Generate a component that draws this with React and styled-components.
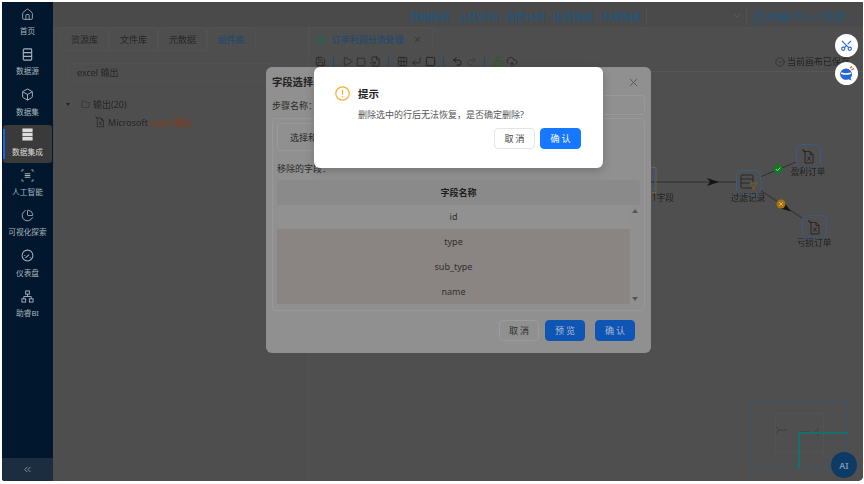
import React from 'react'
import styled, { createGlobalStyle } from 'styled-components'
import {
  Box, ChevronDown, ChevronsLeft, CircleCheck, CloudUpload, FileInput, Grid3x2, Home,
  LockOpen, PieChart, Play, Redo2, Save, Scissors, Square, Undo2, X, Folder, CornerDownLeft, Layers
} from 'lucide-react'

const GlobalStyle = createGlobalStyle`
  html, body {
    margin: 0;
    background: #fff;
  }
  #root {
    width: 864px;
    height: 484px;
    overflow: hidden;
  }
  * {
    box-sizing: border-box;
  }
`

const Frame = styled.div`
  width: 864px;
  height: 484px;
  padding: 2px 1px 3px 2px;
  font-family: "Noto Sans", "Noto Sans CJK SC", sans-serif;
  font-size: 9px;
  color: #262626;
`

const Screen = styled.div`
  position: relative;
  display: flex;
  width: 100%;
  height: 100%;
  overflow: hidden;
  border-radius: 0 0 5px 3px;
  background: #4e4e4e;
  filter: blur(0.25px);
`

const Sidebar = styled.aside`
  display: flex;
  flex-direction: column;
  flex: 0 0 51px;
  padding-top: 2px;
  background: #00172e;
`

const NavItem = styled.div`
  position: relative;
  display: flex;
  flex-direction: column;
  align-items: center;
  width: 49px;
  height: 38px;
  margin: 0 0 2.3px 1px;
  padding-top: 3.5px;
  border-radius: 3px;
  background: ${p => (p.$active ? '#3a3a3b' : 'transparent')};
  color: ${p => (p.$active ? '#dcdcdc' : '#aab3bc')};

  &::before {
    content: ${p => (p.$active ? "''" : 'none')};
    position: absolute;
    left: 0;
    top: 4px;
    bottom: 4px;
    width: 2px;
    background: #1668dc;
  }

  svg {
    display: block;
    width: 13px;
    height: 13px;
  }
`

const NavLabel = styled.span`
  margin-top: 5.5px;
  font-size: 7.7px;
  line-height: 10px;
  white-space: nowrap;
`

const CollapseBar = styled.div`
  display: flex;
  align-items: center;
  justify-content: center;
  height: 23px;
  margin-top: auto;
  background: #1c2d40;
  color: #8895a2;
`

const Main = styled.div`
  display: flex;
  flex-direction: column;
  flex: 1;
  min-width: 0;
`

const Header = styled.header`
  display: flex;
  justify-content: flex-end;
  flex: 0 0 25px;
  padding: 5px 7px 0 0;
  background: #4a4a4a;
  color: #1a5884;
  font-size: 10.1px;
  line-height: 20px;
`

const HeaderLink = styled.span`
  margin-right: 7px;
  white-space: nowrap;
`

const HeaderSelect = styled.div`
  display: flex;
  align-items: center;
  justify-content: flex-end;
  width: 101px;
  height: 18px;
  margin: 0 7px 0 -1px;
  padding-right: 4px;
  border-left: 1px solid #535353;
  border-right: 1px solid #535353;
  color: #626262;
`

const Project = styled.div`
  display: flex;
  align-items: center;
  gap: 3px;
  white-space: nowrap;
`

const Body = styled.div`
  display: flex;
  flex: 1;
  min-height: 0;
`

const LeftPanel = styled.section`
  flex: 0 0 256px;
  padding: 0 0 0 7px;
  border-right: 1px solid #525252;
`

const TabRow = styled.div`
  display: flex;
  height: 24px;
`

const LibTab = styled.div`
  display: flex;
  align-items: center;
  justify-content: center;
  width: 49px;
  border: 1px solid #525252;
  border-bottom: ${p => (p.$active ? '1px solid transparent' : '1px solid #525252')};
  border-radius: 3px 3px 0 0;
  color: ${p => (p.$active ? '#17487a' : '#262626')};
`

const Search = styled.div`
  display: flex;
  align-items: center;
  width: 207px;
  height: 19px;
  margin: 12px 0 0 8px;
  padding-left: 8px;
  border: 1px solid #525252;
  border-radius: 3px;
  color: #262626;
`

const TreeRow = styled.div`
  display: flex;
  align-items: center;
  gap: 3px;
  height: 16px;
  margin-top: ${p => p.$top || 0}px;
  padding-left: ${p => p.$indent}px;
  color: #262626;
  white-space: pre;
`

const Caret = styled.span`
  width: 0;
  height: 0;
  margin-right: 8px;
  border: 2.5px solid transparent;
  border-top: 3.5px solid #222;
  border-bottom: 0;
`

const Match = styled.span`
  color: #8c3a12;
`

const Workspace = styled.section`
  display: flex;
  flex-direction: column;
  flex: 1;
  min-width: 0;
`

const FlowTab = styled.div`
  display: flex;
  align-items: center;
  width: 124px;
  height: 24px;
  padding-left: 6px;
  border: 1px solid #525252;
  border-bottom: 0;
  border-radius: 3px 3px 0 0;
  color: #17487a;
  white-space: nowrap;

  svg:first-child {
    margin-right: 5px;
    color: #1b6a55;
  }
  svg:last-child {
    margin-left: 9px;
    color: #2e2e2e;
  }
`

const Toolbar = styled.div`
  display: flex;
  align-items: center;
  height: 20px;
  margin-top: 1px;
  padding: 0 4px;
  border-bottom: 1px solid #565656;
  color: #1e1e1e;
`

const Tool = styled.span`
  display: flex;
  justify-content: center;
  width: 14px;
  color: ${p => p.$color || 'inherit'};
`

const ToolSep = styled.span`
  width: 1px;
  height: 11px;
  margin: 0 6px;
  background: #1d4d78;
`

const Saved = styled.span`
  display: flex;
  align-items: center;
  gap: 2px;
  margin-left: auto;
  margin-right: 9px;
  color: #222;
  white-space: nowrap;
`

const Canvas = styled.div`
  position: relative;
  flex: 1;
  background-color: #4f4f4f;
  background-image: radial-gradient(#585858 0.6px, transparent 0.7px);
  background-size: 14px 14px;
`

const Edges = styled.svg`
  position: absolute;
  inset: 0;
  width: 100%;
  height: 100%;
`

const FlowNode = styled.div`
  position: absolute;
  left: ${p => p.$x}px;
  top: ${p => p.$y}px;
  display: flex;
  align-items: center;
  justify-content: center;
  width: 25px;
  height: 25px;
  border: 1.5px solid #3b5a80;
  border-radius: 6px;
  color: #222;
`

const NodeLabel = styled.span`
  position: absolute;
  left: ${p => p.$x}px;
  top: ${p => p.$y}px;
  width: 50px;
  color: #222;
  font-size: 8.7px;
  line-height: 12px;
  text-align: center;
  white-space: nowrap;
`

const Minimap = styled.div`
  position: absolute;
  left: 441px;
  top: 329px;
  width: 98px;
  height: 68px;
  border: 1px solid #3c5468;
`

const MinimapView = styled.div`
  position: absolute;
  left: 24px;
  top: 11px;
  width: 49px;
  height: 40px;
  border: 1px solid #535353;
`

const MinimapCorner = styled.div`
  position: absolute;
  left: 47px;
  top: 30px;
  right: -1px;
  bottom: -1px;
  border-top: 2px solid #17706a;
  border-left: 2px solid #17706a;
`

const MinimapFlow = styled.svg`
  position: absolute;
  left: 24px;
  top: 24px;
`

const AiButton = styled.div`
  position: absolute;
  right: 6px;
  bottom: 3px;
  display: flex;
  align-items: center;
  justify-content: center;
  width: 26px;
  height: 26px;
  border-radius: 50%;
  background: #0e3a66;
  color: #7f9bb8;
  font-size: 9px;
  font-weight: 600;
`

const FloatButton = styled.div`
  position: absolute;
  right: 5px;
  top: ${p => p.$top}px;
  display: flex;
  align-items: center;
  justify-content: center;
  width: 23px;
  height: 23px;
  border-radius: 50%;
  background: #fff;
  color: #2465d8;
`

const TurnedScissors = styled(Scissors)`
  transform: rotate(-90deg);
`

const FieldDialog = styled.div`
  position: absolute;
  left: 264px;
  top: 65px;
  display: flex;
  flex-direction: column;
  width: 385px;
  height: 286px;
  padding: 0 6px;
  border-radius: 6px;
  background: #909090;
  color: #2a2a2a;
`

const DialogHead = styled.div`
  display: flex;
  align-items: center;
  justify-content: space-between;
  height: 28px;
  padding-right: 5px;
  font-size: 10.3px;
  font-weight: 700;
  color: #222;

  svg {
    margin-top: 3px;
    color: #4a4a4a;
  }
`

const FieldRow = styled.div`
  display: flex;
  align-items: center;
  height: 20px;
  font-size: 9px;
`

const FakeInput = styled.div`
  flex: 1;
  height: 20px;
  margin-left: 5px;
  border: 1px solid #999;
  border-radius: 3px;
`

const Card = styled.div`
  height: 193px;
  margin-top: 3px;
  padding: 4px 4px 0 4px;
  border: 1px solid #999;
  border-radius: 4px;
`

const StepTab = styled.div`
  display: flex;
  align-items: center;
  width: 120px;
  height: 28px;
  padding-left: 12px;
  border: 1px solid #999;
  border-radius: 3px;
`

const RemovedLabel = styled.div`
  height: 12px;
  margin: 12px 0 4.5px 0;
  line-height: 12px;
`

const Table = styled.div`
  width: 363px;
`

const TableHead = styled.div`
  display: flex;
  align-items: center;
  justify-content: center;
  height: 25px;
  border-radius: 4px 4px 0 0;
  background: #8a8a8a;
  color: #1d1d1d;
  font-weight: 700;
`

const TableBody = styled.div`
  display: flex;
`

const Rows = styled.div`
  flex: 1;
`

const Row = styled.div`
  display: flex;
  align-items: center;
  justify-content: center;
  height: 24.8px;
  background: ${p => (p.$selected ? '#8a8583' : '#919191')};
  color: #303030;
`

const Scroll = styled.div`
  display: flex;
  flex-direction: column;
  align-items: center;
  justify-content: space-between;
  flex: 0 0 10px;
  padding: 4px 0 3px;
`

const ScrollArrow = styled.span`
  width: 0;
  height: 0;
  border-left: 3px solid transparent;
  border-right: 3px solid transparent;
  border-bottom: ${p => (p.$up ? '4px solid #555' : '0')};
  border-top: ${p => (p.$up ? '0' : '4px solid #555')};
`

const DialogFoot = styled.div`
  display: flex;
  justify-content: flex-end;
  margin-top: 9px;
  padding-right: 10px;
`

const Button = styled.button`
  width: ${p => p.$width || 40}px;
  height: 21px;
  margin-left: ${p => p.$gap || 0}px;
  padding: 0;
  border: 1px solid ${p => (p.$primary ? p.$fill : p.$line)};
  border-radius: 4px;
  background: ${p => (p.$primary ? p.$fill : 'transparent')};
  color: ${p => (p.$primary ? p.$text : p.$ink)};
  font-family: inherit;
  font-size: 9px;
  letter-spacing: 2px;
  text-indent: 2px;
`

const ConfirmDialog = styled.div`
  position: absolute;
  left: 312px;
  top: 65px;
  display: flex;
  flex-direction: column;
  width: 289px;
  height: 101px;
  padding: 18px 22px 0 21px;
  border-radius: 6px;
  background: #fff;
  box-shadow: 0 3px 10px rgb(0 0 0 / 20%);
`

const ConfirmTitle = styled.div`
  display: flex;
  align-items: center;
  gap: 8px;
  height: 17px;
  font-size: 10.5px;
  font-weight: 700;
  color: #222;
`

const ConfirmText = styled.div`
  height: 14px;
  margin: 6px 0 0 23px;
  font-size: 9px;
  line-height: 14px;
  color: #555;
`

const ConfirmFoot = styled.div`
  display: flex;
  justify-content: flex-end;
  margin-top: 6px;
`

const navItems = [
  { label: '首页', icon: <Home strokeWidth={1.6} /> },
  { label: '数据源', icon: <Rows3Icon /> },
  { label: '数据集', icon: <Box strokeWidth={1.8} /> },
  { label: '数据集成', icon: <StackIcon />, active: true },
  { label: '人工智能', icon: <ScanIcon /> },
  { label: '可视化探索', icon: <PieChart strokeWidth={1.6} /> },
  { label: '仪表盘', icon: <DialIcon /> },
  { label: '助睿BI', icon: <TreeIcon /> }
]

function Rows3Icon() {
  return (
    <svg viewBox="0 0 14 14" fill="none" stroke="currentColor" strokeWidth="1.2">
      <rect x="2.5" y="1" width="9" height="12" rx="1" />
      <path d="M2.5 5h9M2.5 9h9" />
    </svg>
  )
}

function StackIcon() {
  return (
    <svg viewBox="0 0 14 14" fill="currentColor">
      <rect x="1.5" y="0.5" width="11" height="3.8" />
      <rect x="1.5" y="5.1" width="11" height="3.8" />
      <rect x="1.5" y="9.7" width="11" height="3.8" />
    </svg>
  )
}

function ScanIcon() {
  return (
    <svg viewBox="0 0 14 14" fill="none" stroke="currentColor" strokeWidth="0.9">
      <path d="M1 3V1h2M11 1h2v2M13 11v2h-2M3 13H1v-2" />
      <path d="M4 5h6M4 7h6M4 9h6" strokeWidth="1.1" />
    </svg>
  )
}

function DialIcon() {
  return (
    <svg viewBox="0 0 14 14" fill="none" stroke="currentColor" strokeWidth="1.1">
      <circle cx="7" cy="7" r="5.800" />
      <path d="M4.800 9.500l4-3.500M3.500 7h1M9.500 9.500h1" />
    </svg>
  )
}

function TreeIcon() {
  return (
    <svg viewBox="0 0 14 14" fill="none" stroke="currentColor" strokeWidth="1">
      <rect x="5" y="1" width="4" height="3.500" />
      <rect x="1" y="9.500" width="4" height="3.500" />
      <rect x="9" y="9.500" width="4" height="3.500" />
      <path d="M7 4.500V7M3 9.500V7h8v2.500" />
    </svg>
  )
}

function SheetIcon({ size = 13 }) {
  return (
    <svg width={size} height={size * 15 / 13} viewBox="0 0 13 15" fill="none" stroke="#222" strokeWidth="0.9">
      <path d="M3 2.500h5l3 3v8.500H3z" />
      <path d="M8 2.500v3h3" />
      <path d="M5.500 7.500l3 4M8.500 7.500l-3 4" />
      <path d="M0.500 0.500l2.500 2.500" strokeWidth="1.300" />
    </svg>
  )
}

function FilterNodeIcon() {
  return (
    <svg width="18" height="17" viewBox="0 0 18 17" fill="none" stroke="#242424" strokeWidth="0.9">
      <rect x="1" y="1" width="12" height="13" rx="1" />
      <path d="M1 5h12M1 9h9" />
      <path d="M10 9h7l-3 3.500V16l-1.200-.8v-2.700z" stroke="#7a6420" fill="#4f4f4f" />
    </svg>
  )
}

function WarnIcon() {
  return (
    <svg width="15" height="15" viewBox="0 0 15 15" fill="none">
      <circle cx="7.500" cy="7.500" r="6.700" stroke="#fbae2b" strokeWidth="1.200" />
      <path d="M7.500 3.800v4.800" stroke="#fbae2b" strokeWidth="1.300" />
      <circle cx="7.500" cy="10.800" r="0.800" fill="#fbae2b" />
    </svg>
  )
}

function BotIcon() {
  return (
    <svg width="17" height="17" viewBox="0 0 17 17">
      <path d="M8 3.500a6 5.800 0 0 1 6 5.800c0 1.500-.5 2.800-1.500 3.800l1 2.400-3-1.300a6 5.800 0 0 1-8.500-4.900A6 5.800 0 0 1 8 3.500z" fill="#2465d8" />
      <path d="M3.500 8.200c2.800 1 6.200 1 9 0" stroke="#fff" strokeWidth="1.500" fill="none" strokeLinecap="round" />
      <path d="M12 3l2-1.500M13.500 5l2.500-1.500" stroke="#ef5a28" strokeWidth="1.400" />
    </svg>
  )
}

function ProjectIcon() {
  return (
    <svg width="11" height="11" viewBox="0 0 11 11" fill="none" stroke="currentColor" strokeWidth="1">
      <rect x="0.700" y="0.700" width="9.600" height="9.600" />
      <path d="M3.500 2.500v4M7.500 2.500v4" />
    </svg>
  )
}

function CanvasEdges() {
  return (
    <Edges>
      <defs>
        <marker id="head" markerWidth="14" markerHeight="8" refX="6" refY="4" orient="auto">
          <path d="M0 0l12 4-12 4 3-4z" fill="#151515" />
        </marker>
      </defs>
      <path d="M340 110 H427" stroke="#262626" strokeWidth="0.800" />
      <path d="M340 110 H404" stroke="none" markerEnd="url(#head)" />
      <path d="M451 105 L487 90" stroke="#262626" strokeWidth="0.800" />
      <path d="M451 118 L493 146" stroke="#262626" strokeWidth="0.800" />
      <path d="M451 118 L477 136" stroke="none" markerEnd="url(#head)" />
      <circle cx="469" cy="97" r="4.500" fill="#0c7a1e" />
      <path d="M466.800 97l1.600 1.700 3-3.200" stroke="#b8d8b8" strokeWidth="0.900" fill="none" />
      <circle cx="472" cy="132" r="4.500" fill="#a8700f" />
      <path d="M470.300 130.300l3.400 3.400M473.700 130.300l-3.400 3.400" stroke="#d8c8a0" strokeWidth="0.800" />
      <path d="M341 95.500 h6 v25 h-6" stroke="#8a6a20" strokeWidth="1" strokeDasharray="2 1" fill="none" />
      <path d="M341 97.500 h2 a3 3 0 0 1 3 3 v14 a3 3 0 0 1 -3 3 h-2" stroke="#3b5a80" strokeWidth="1.200" fill="none" />
    </Edges>
  )
}

export default function App() {
  return (
    <Frame>
      <GlobalStyle />
      <Screen>
        <Sidebar>
          {navItems.map(item => (
            <NavItem key={item.label} $active={item.active}>
              {item.icon}
              <NavLabel>{item.label}</NavLabel>
            </NavItem>
          ))}
          <CollapseBar>
            <ChevronsLeft size={11} />
          </CollapseBar>
        </Sidebar>
        <Main>
          <Header>
            <HeaderLink>数据探查</HeaderLink>
            <HeaderLink>公共空间</HeaderLink>
            <HeaderLink>调度计划</HeaderLink>
            <HeaderLink>任务管理</HeaderLink>
            <HeaderLink>环境管理</HeaderLink>
            <HeaderSelect>
              <ChevronDown size={10} />
            </HeaderSelect>
            <Project>
              <ProjectIcon />
              助睿ETL入门实验 ...
            </Project>
          </Header>
          <Body>
            <LeftPanel>
              <TabRow>
                <LibTab>资源库</LibTab>
                <LibTab>文件库</LibTab>
                <LibTab>元数据</LibTab>
                <LibTab $active>组件库</LibTab>
              </TabRow>
              <Search>excel 输出</Search>
              <TreeRow $indent={6} $top={14}>
                <Caret />
                <Folder size={9} strokeWidth={1.2} />
                输出(20)
              </TreeRow>
              <TreeRow $indent={35} $top={2}>
                <SheetIcon size={10} />
                <span>Microsoft <Match>excel 输出</Match></span>
              </TreeRow>
            </LeftPanel>
            <Workspace>
              <FlowTab>
                <Layers size={11} />
                订单利润分流处理
                <X size={9} />
              </FlowTab>
              <Toolbar>
                <Tool><Save size={11} strokeWidth={1.4} /></Tool>
                <ToolSep />
                <Tool><Play size={11} strokeWidth={1.4} /></Tool>
                <Tool><Square size={10} strokeWidth={1.4} /></Tool>
                <Tool><FileInput size={11} strokeWidth={1.4} /></Tool>
                <ToolSep />
                <Tool><Grid3x2 size={11} strokeWidth={1.4} /></Tool>
                <Tool><CornerDownLeft size={11} strokeWidth={1.4} /></Tool>
                <Tool><Square size={11} strokeWidth={1.8} /></Tool>
                <ToolSep />
                <Tool><Undo2 size={11} strokeWidth={2} /></Tool>
                <Tool $color="#3e3e3e"><Redo2 size={11} strokeWidth={2} /></Tool>
                <ToolSep />
                <Tool $color="#12681f"><LockOpen size={11} strokeWidth={1.6} /></Tool>
                <Tool><CloudUpload size={12} strokeWidth={1.4} /></Tool>
                <Saved>
                  <CircleCheck size={10} strokeWidth={1.4} />
                  当前画布已保存
                </Saved>
              </Toolbar>
              <Canvas>
                <CanvasEdges />
                <NodeLabel $x={329} $y={120}>1字段</NodeLabel>
                <FlowNode $x={427} $y={98}><FilterNodeIcon /></FlowNode>
                <NodeLabel $x={414} $y={120}>过滤记录</NodeLabel>
                <FlowNode $x={487} $y={72}><SheetIcon /></FlowNode>
                <NodeLabel $x={474} $y={94}>盈利订单</NodeLabel>
                <FlowNode $x={493} $y={143}><SheetIcon /></FlowNode>
                <NodeLabel $x={480} $y={165}>亏损订单</NodeLabel>
                <Minimap>
                  <MinimapView />
                  <MinimapFlow width="49" height="14" viewBox="0 0 49 14" fill="none" stroke="#3a3a3a" strokeWidth="0.8">
                    <path d="M1 1l3 3-3 3M4 4h8M40 6l4-3M40 6l4 4" />
                    <path d="M24 6h10" />
                  </MinimapFlow>
                  <MinimapCorner />
                </Minimap>
                <AiButton>AI</AiButton>
              </Canvas>
            </Workspace>
          </Body>
        </Main>

        <FloatButton $top={32}><TurnedScissors size={13} /></FloatButton>
        <FloatButton $top={60}><BotIcon /></FloatButton>

        <FieldDialog>
          <DialogHead>
            字段选择
            <X size={13} strokeWidth={1.4} />
          </DialogHead>
          <FieldRow>
            步骤名称：
            <FakeInput />
          </FieldRow>
          <Card>
            <StepTab>选择和修改</StepTab>
            <RemovedLabel>移除的字段：</RemovedLabel>
            <Table>
              <TableHead>字段名称</TableHead>
              <TableBody>
                <Rows>
                  <Row>id</Row>
                  <Row $selected>type</Row>
                  <Row $selected>sub_type</Row>
                  <Row $selected>name</Row>
                </Rows>
                <Scroll>
                  <ScrollArrow $up />
                  <ScrollArrow />
                </Scroll>
              </TableBody>
            </Table>
          </Card>
          <DialogFoot>
            <Button $line="#9c9c9c" $ink="#2f2f2f">取消</Button>
            <Button $primary $fill="#0f55b4" $text="#a9bbd4" $gap={6}>预览</Button>
            <Button $primary $fill="#0f55b4" $text="#a9bbd4" $gap={10}>确认</Button>
          </DialogFoot>
        </FieldDialog>

        <ConfirmDialog>
          <ConfirmTitle>
            <WarnIcon />
            提示
          </ConfirmTitle>
          <ConfirmText>删除选中的行后无法恢复，是否确定删除?</ConfirmText>
          <ConfirmFoot>
            <Button $width={41} $line="#e4e4e4" $ink="#444">取消</Button>
            <Button $primary $width={41} $fill="#1677ff" $text="#fff" $gap={5}>确认</Button>
          </ConfirmFoot>
        </ConfirmDialog>
      </Screen>
    </Frame>
  )
}
